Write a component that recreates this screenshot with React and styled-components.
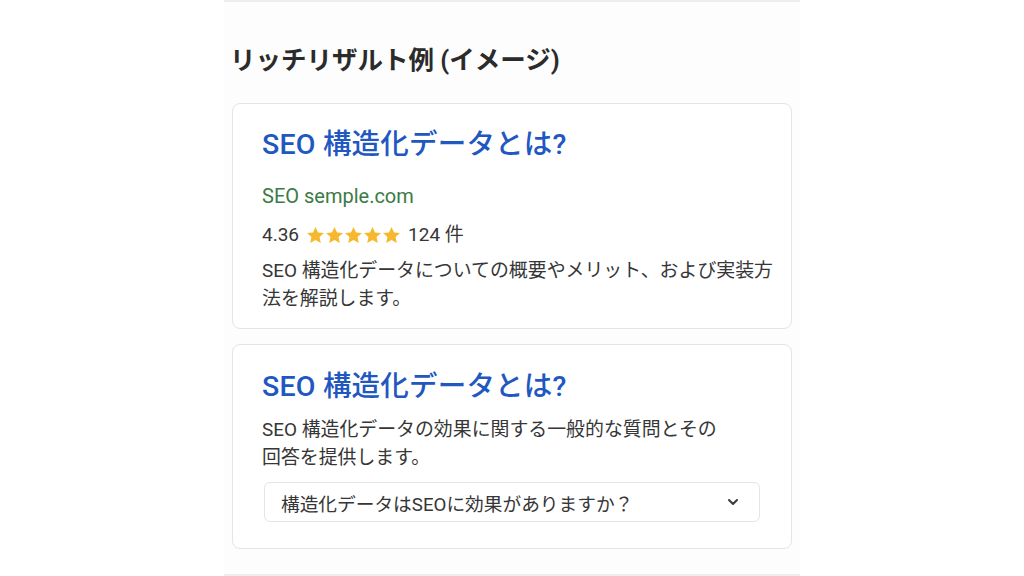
import React from 'react';
import styled, { createGlobalStyle } from 'styled-components';

const GlobalStyle = createGlobalStyle`
  html, body {
    margin: 0;
    padding: 0;
    background: #ffffff;
  }
  body {
    font-family: Roboto, "Noto Sans CJK JP", sans-serif;
    color: #333;
  }
`;

const Column = styled.div`
  width: 576px;
  height: 576px;
  margin: 0 auto;
  box-sizing: border-box;
  background: #fdfdfd;
  border-top: 2px solid #eeeeee;
  border-bottom: 2px solid #eeeeee;
  padding: 41px 8px 0;
  display: flex;
  flex-direction: column;
`;

const Heading = styled.h2`
  margin: 0 0 26px -2px;
  font-size: 25.5px;
  line-height: 34px;
  font-weight: 700;
  color: #2b2b2b;
`;

const Card = styled.section`
  background: #ffffff;
  border: 1px solid #e4e4e4;
  border-radius: 8px;
  padding: ${p => p.$pad};
  margin-bottom: ${p => p.$gap || 0}px;
  display: flex;
  flex-direction: column;
`;

const Title = styled.div`
  font-size: 28.5px;
  line-height: 40px;
  font-weight: 500;
  color: #2157c1;
  letter-spacing: 0.2px;
`;

const Site = styled.div`
  margin-top: 17px;
  font-size: 20px;
  line-height: 28px;
  color: #3b7a44;
`;

const Rating = styled.div`
  margin-top: 11px;
  display: flex;
  align-items: center;
  gap: 7px;
  font-size: 19px;
  line-height: 28px;
  color: #363636;
`;

const Stars = styled.span`
  display: flex;
  svg {
    display: block;
  }
`;

const Desc = styled.p`
  margin: ${p => p.$top}px -12px 0 0;
  font-size: 18.9px;
  line-height: 28px;
  color: #363636;
  white-space: nowrap;
`;

const Faq = styled.div`
  margin-top: 10px;
  margin-left: 2px;
  margin-right: 2px;
  height: 40px;
  box-sizing: border-box;
  border: 1px solid #e4e4e4;
  border-radius: 6px;
  display: flex;
  align-items: center;
  justify-content: space-between;
  padding: 0 18px 0 16px;
  font-size: 18.7px;
  color: #363636;
`;

const Star = () => (
  <svg width="19" height="19" viewBox="0 0 24 24">
    <path
      d="M12 1.2l3.2 6.9 7.5.8-5.6 5.1 1.6 7.4L12 17.6l-6.7 3.8 1.6-7.4-5.6-5.1 7.5-.8z"
      fill="#f5b82e"
    />
  </svg>
);

const Chevron = () => (
  <svg width="16" height="16" viewBox="0 0 24 24" fill="none" stroke="#3a3a3a" strokeWidth="3" strokeLinecap="round" strokeLinejoin="round">
    <path d="M6 9l6 6 6-6" />
  </svg>
);

export default function App() {
  return (
    <>
      <GlobalStyle />
      <Column>
        <Heading>リッチリザルト例 (イメージ)</Heading>

        <Card $pad="21px 29px 15px" $gap={15}>
          <Title>SEO 構造化データとは?</Title>
          <Site>SEO semple.com</Site>
          <Rating>
            <span>4.36</span>
            <Stars>
              {[0, 1, 2, 3, 4].map(i => <Star key={i} />)}
            </Stars>
            <span>124 件</span>
          </Rating>
          <Desc $top={8}>
            SEO 構造化データについての概要やメリット、および実装方<br />
            法を解説します。
          </Desc>
        </Card>

        <Card $pad="22px 29px 26px">
          <Title>SEO 構造化データとは?</Title>
          <Desc $top={9}>
            SEO 構造化データの効果に関する一般的な質問とその<br />
            回答を提供します。
          </Desc>
          <Faq>
            <span>構造化データはSEOに効果がありますか？</span>
            <Chevron />
          </Faq>
        </Card>
      </Column>
    </>
  );
}
